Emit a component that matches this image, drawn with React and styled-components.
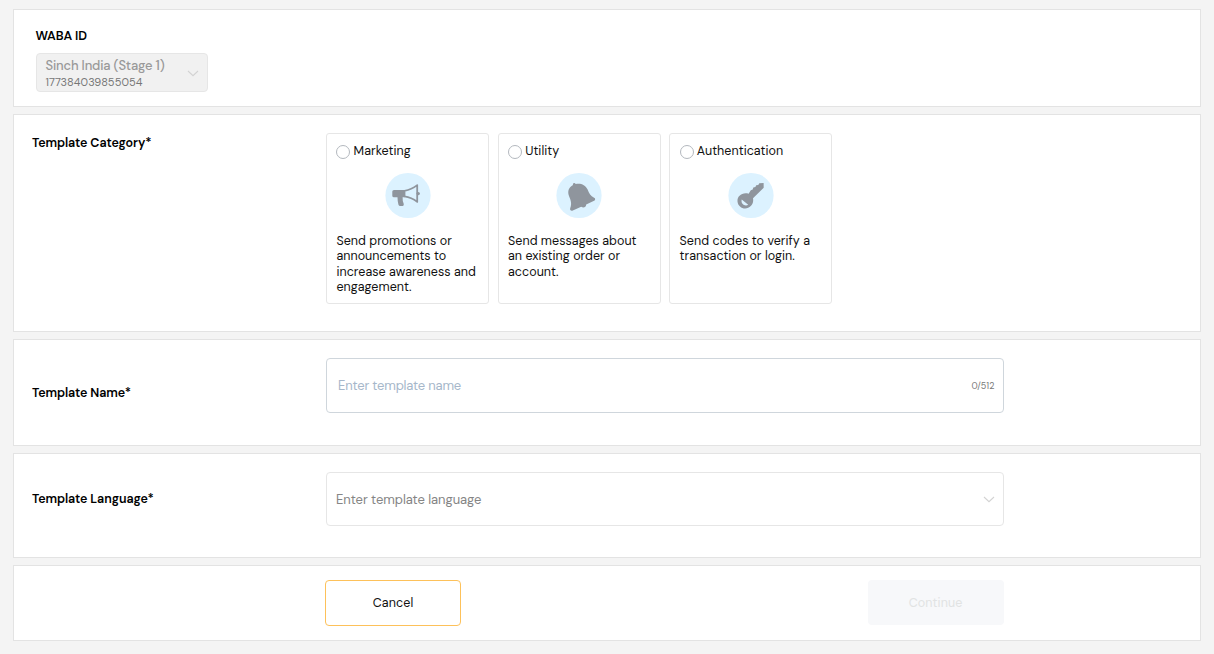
import { useState } from 'react';
import styled, { createGlobalStyle } from 'styled-components';

const GlobalStyle = createGlobalStyle`
    * {
        box-sizing: border-box;
    }

    body {
        margin: 0;
        background: #f4f4f4;
        color: #111;
        font-family: 'DM Sans', Inter, sans-serif;
        font-size: 13px;
    }

    button, input {
        font-family: inherit;
    }
`;

const Page = styled.main`
    display: flex;
    flex-direction: column;
    gap: 7px;
    width: 1214px;
    height: 654px;
    padding: 9px 13px;
`;

const Panel = styled.section`
    display: flex;
    flex: none;
    align-items: flex-start;
    height: ${(props) => props.$height}px;
    background: white;
    border: 1px solid #e3e3e3;
`;

const Account = styled.div`
    display: flex;
    flex-direction: column;
    gap: 8px;
    padding: 18px 21.5px;
`;

const Title = styled.div`
    color: #000;
    font-size: 12.5px;
    font-weight: 600;
    line-height: 17px;
    letter-spacing: -0.08px;
`;

const AccountSelect = styled.div`
    display: flex;
    justify-content: space-between;
    align-items: center;
    width: 172px;
    height: 39px;
    padding: 2px 7.5px 0 9px;
    background: #f1f1f1;
    border: 1px solid #e6e6e6;
    border-radius: 4px;
`;

const AccountName = styled.div`
    color: #999;
    font-size: 13px;
    line-height: 17px;
    letter-spacing: -0.16px;
    font-weight: 500;
    white-space: nowrap;
`;

const AccountNumber = styled.div`
    color: #777;
    font-size: 11px;
    line-height: 17px;
    letter-spacing: 0.05px;
`;

const Label = styled.div`
    flex: none;
    width: 312px;
    padding-left: 18px;
    padding-top: ${(props) => props.$top}px;
`;

const Cards = styled.div`
    display: grid;
    grid-template-columns: repeat(3, 163px);
    gap: 8.6px;
    padding-top: 18px;
`;

const Card = styled.div`
    height: 171px;
    padding: 8px 0 8px 9.4px;
    border: 1px solid #e6e6e6;
    border-radius: 3px;
    cursor: pointer;
`;

const CardHead = styled.div`
    display: flex;
    align-items: center;
    gap: 3.2px;
    height: 18px;
    font-size: 12.5px;
    letter-spacing: 0.04px;
`;

const Radio = styled.span`
    width: 14px;
    height: 14px;
    margin-top: 2px;
    border: 1px solid #b3b8be;
    border-radius: 50%;
    background: ${(props) => (props.$checked ? '#ffbe3c' : 'white')};
`;

const CardIcon = styled.svg`
    display: block;
    width: 46px;
    height: 47px;
    margin: 12px 0 15px 48.4px;
`;

const CardText = styled.div`
    font-size: 12.5px;
    line-height: 15.4px;
    letter-spacing: 0.04px;
    white-space: pre-line;
`;

const Field = styled.div`
    display: flex;
    align-items: center;
    justify-content: space-between;
    width: 678px;
    height: ${(props) => (props.$select ? 54 : 55)}px;
    margin-top: 18px;
    padding: 0 8.5px 0 ${(props) => (props.$select ? 9 : 11)}px;
    border: 1px solid ${(props) => (props.$select ? '#e6e6e6' : '#cfd6dc')};
    border-radius: 4px;
`;

const NameInput = styled.input`
    flex: 1;
    padding: 0;
    border: 0;
    outline: none;
    background: transparent;
    font-size: 13px;
    letter-spacing: -0.18px;

    &::placeholder {
        color: #a6b7ca;
        opacity: 1;
    }
`;

const Counter = styled.span`
    color: #777;
    font-size: 9px;
    letter-spacing: 0.1px;
`;

const Placeholder = styled.span`
    color: #858585;
    font-size: 13px;
    letter-spacing: -0.05px;
`;

const Actions = styled.div`
    display: flex;
    align-items: flex-start;
    justify-content: space-between;
    width: 678.6px;
    margin-left: 311px;
    padding-top: 14px;
`;

const Button = styled.button`
    width: 136px;
    height: ${(props) => (props.$primary ? 45 : 46)}px;
    padding: 0;
    border: ${(props) => (props.$primary ? '0' : '1px solid #fdc15a')};
    border-radius: 4px;
    background: ${(props) => (props.$primary ? '#f7f8fa' : 'white')};
    color: ${(props) => (props.$primary ? '#e1e3e3' : '#111')};
    font-size: 12.5px;
    letter-spacing: 0.12px;
`;

const Chevron = () => (
    <svg width="12" height="7" viewBox="0 0 12 7" fill="none" stroke="#d3d3d3" strokeWidth="1.1">
        <path d="M1 1l5 4.7L11 1" />
    </svg>
);

const Megaphone = () => (
    <>
        <path fill="#8f959d" d="M9 17.3h10.8v7.4H17.6q-.2 3.6 1.1 6.500 .6 2-1 2.200h-2.400q-1.500 0-1.900-1.500-.9-3.500-.9-7.200H9q-1.700 0-1.700-1.600v-4.200q0-1.600 1.700-1.600z" />
        <path fill="none" stroke="#8f959d" strokeWidth="1.8" strokeLinejoin="round" d="M19.500 18.200Q26.500 17 32.200 12.500V29.300Q26.500 24.800 19.500 23.800z" />
        <circle fill="#8f959d" cx="33.200" cy="21" r="1.700" />
    </>
);

const Bell = () => (
    <path fill="#8f959d" d="M17 12.400C16.300 10.300 18.800 9.500 19.700 11.400C24.300 10.200 29.400 12.100 31.600 17C33.200 20.800 34.500 23.800 38.100 25.100C39.500 25.600 39.500 27.600 38.100 28.200L30.200 31.800C30.100 34.500 27.500 35.600 25.200 34.100L16.800 38C15 38.900 13.600 37.300 14.200 35.700C16.200 30.900 14.500 27.300 13 23.500C11.200 18.800 12.800 14.500 17 12.400z" />
);

const Key = () => (
    <path
        fill="#8f959d"
        fillRule="evenodd"
        d="M35.600 10.300L31.300 10.600L30.300 12.300L28.200 12.600L27.400 14.500L25.300 14.900L24.700 17L22.800 17.600L20.600 21.100C14.200 19.300 9 23.600 9.500 28.800C10 34.200 15.500 37.200 20.200 35.200C24.300 33.400 25.800 29.400 25 25.600L35.700 15.200zM13.700 27L20.200 32.200C17.400 34.300 12.500 31.700 13.700 27z"
    />
);

const categories = [
    {
        name: 'Marketing',
        text: 'Send promotions or\nannouncements to\nincrease awareness and\nengagement.',
        icon: <Megaphone />,
    },
    {
        name: 'Utility',
        text: 'Send messages about\nan existing order or\naccount.',
        icon: <Bell />,
    },
    {
        name: 'Authentication',
        text: 'Send codes to verify a\ntransaction or login.',
        icon: <Key />,
    },
];

function App() {
    const [category, setCategory] = useState(null);
    const [name, setName] = useState('');

    return (
        <Page>
            <GlobalStyle />
            <Panel $height={98}>
                <Account>
                    <Title>WABA ID</Title>
                    <AccountSelect>
                        <div>
                            <AccountName>Sinch India (Stage 1)</AccountName>
                            <AccountNumber>177384039855054</AccountNumber>
                        </div>
                        <Chevron />
                    </AccountSelect>
                </Account>
            </Panel>

            <Panel $height={218}>
                <Label $top={20}><Title>Template Category*</Title></Label>
                <Cards>
                    {categories.map((item) => (
                        <Card key={item.name} onClick={() => setCategory(item.name)}>
                            <CardHead>
                                <Radio $checked={category === item.name} />
                                {item.name}
                            </CardHead>
                            <CardIcon viewBox="0 0 46 47">
                                <circle cx="23" cy="23.500" r="22.600" fill="#dcf2ff" />
                                <g transform="translate(0 .6)">{item.icon}</g>
                            </CardIcon>
                            <CardText>{item.text}</CardText>
                        </Card>
                    ))}
                </Cards>
            </Panel>

            <Panel $height={107}>
                <Label $top={45}><Title>Template Name*</Title></Label>
                <Field>
                    <NameInput
                        placeholder="Enter template name"
                        maxLength={512}
                        value={name}
                        onChange={(e) => setName(e.target.value)}
                    />
                    <Counter>{name.length}/512</Counter>
                </Field>
            </Panel>

            <Panel $height={105}>
                <Label $top={37}><Title>Template Language*</Title></Label>
                <Field $select>
                    <Placeholder>Enter template language</Placeholder>
                    <Chevron />
                </Field>
            </Panel>

            <Panel $height={76}>
                <Actions>
                    <Button>Cancel</Button>
                    <Button $primary disabled>Continue</Button>
                </Actions>
            </Panel>
        </Page>
    );
}

export default App;
